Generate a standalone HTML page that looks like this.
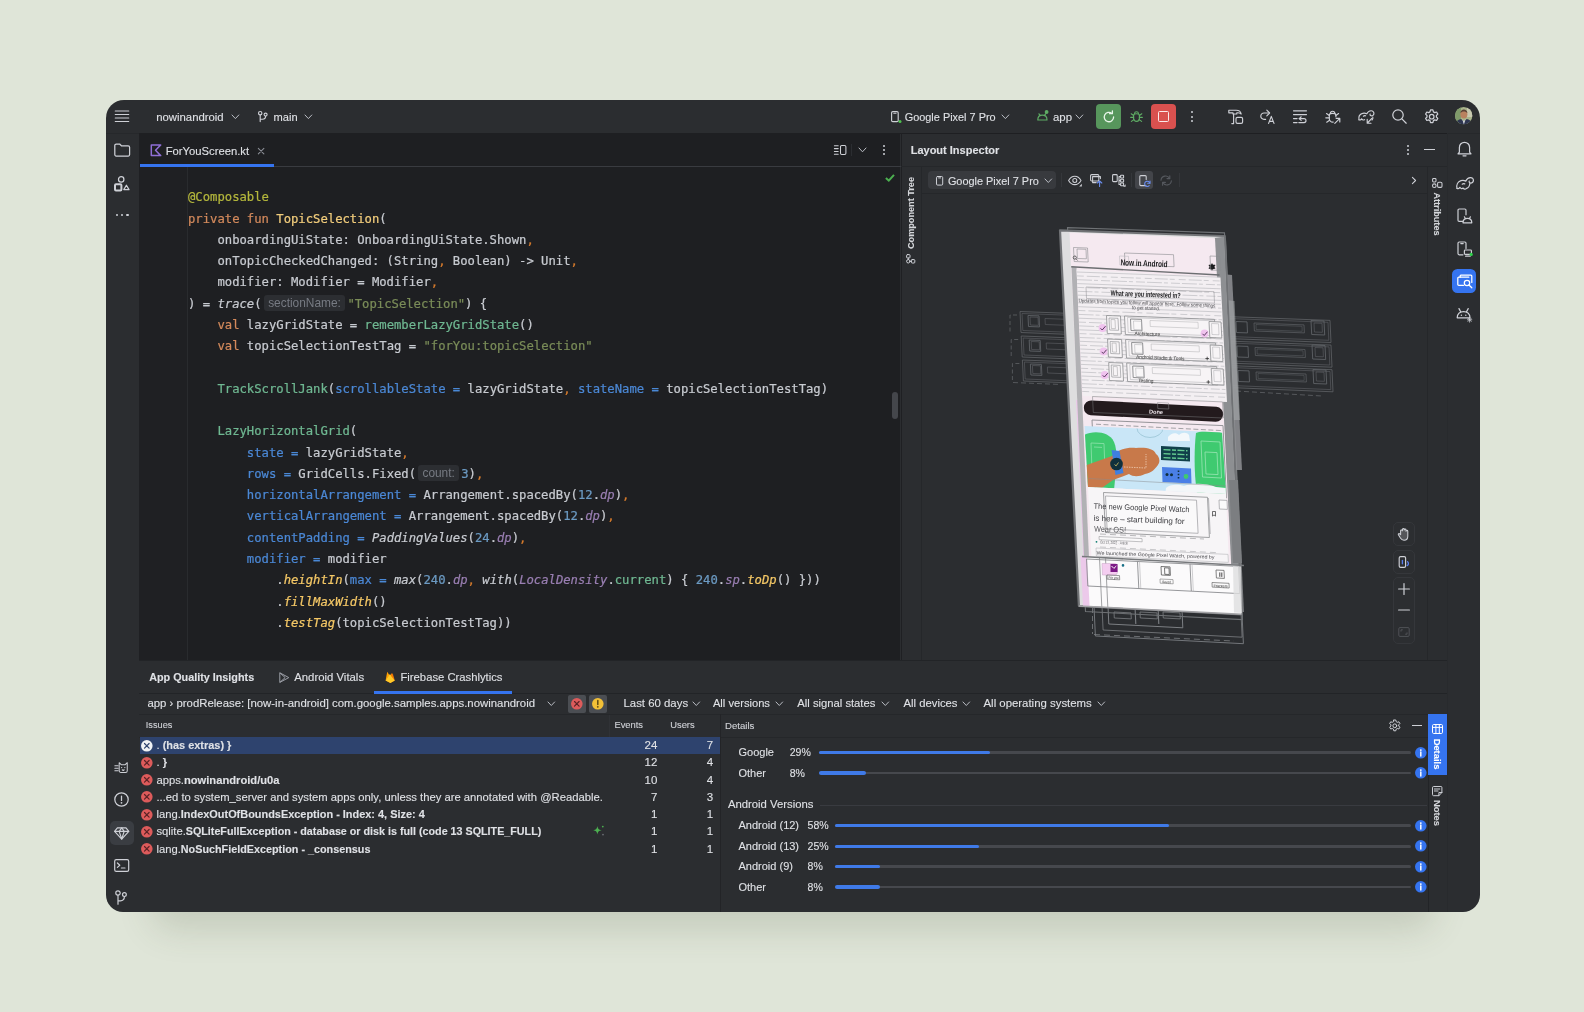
<!DOCTYPE html>
<html lang="en">
<head>
<meta charset="utf-8">
<title>Android Studio - nowinandroid - ForYouScreen.kt</title>
<style>
*{box-sizing:border-box;margin:0;padding:0}
html,body{width:1584px;height:1012px;overflow:hidden}
body{background:#dfe5d8;font-family:"Liberation Sans",sans-serif;font-size:11.2px;color:#dfe1e5;position:relative}
.abs,.win *{position:absolute}
.win{will-change:transform;position:absolute;left:106px;top:100px;width:1374px;height:812px;border-radius:18px 18px 17px 17px;background:#2b2d30;overflow:hidden}
.shadow{position:absolute;left:152px;top:140px;width:1282px;height:756px;border-radius:20px;box-shadow:0 34px 34px 0 rgba(70,82,52,.17)}
.t{-webkit-text-stroke:0.1px currentColor;white-space:nowrap;line-height:14px;height:14px;color:#dfe1e5}
.b{font-weight:bold}
.t b,.t span{position:static}
svg{overflow:visible}
.ic{fill:none;stroke:#ced0d6;stroke-width:1.15;stroke-linecap:round;stroke-linejoin:round}
/* editor */
.ed{left:33px;top:33px;width:761px;height:527px;background:#1e1f22}
.code{font-family:"DejaVu Sans Mono","Liberation Mono",monospace;font-size:12.22px;white-space:pre;color:#c8cbd1;-webkit-text-stroke:0.22px currentColor;left:82px;height:21.28px;line-height:21.28px;letter-spacing:0}
.code span{position:static}
.k{color:#d48a5c}.a{color:#b4b73c}.f{color:#f2cd7c}.c{color:#d47a2c}.s{color:#7a8c58}.n{color:#4b88d6}
.g{color:#6fb892}.u{color:#6c9bc4}.p{color:#9a7fb3;font-style:italic}.e{color:#f5c866;font-style:italic}.i{font-style:italic}
.h{-webkit-text-stroke:0;font-family:"Liberation Sans",sans-serif;font-size:11.9px;color:#777b83;background:#2c2e32;border-radius:3px;display:inline-block;height:16.5px;line-height:16.5px;vertical-align:1px;text-align:center;letter-spacing:0}
</style>
</head>
<body>
<div class="shadow"></div>
<div class="win">
<!-- main toolbar -->
<div style="left:33.00px;top:33.00px;width:1308.00px;height:1.00px;background:#1e1f22;"></div>
<div style="left:0.00px;top:33.00px;width:33.00px;height:1.00px;background:#26282b;"></div>
<div style="left:1341.00px;top:33.00px;width:33.00px;height:1.00px;background:#26282b;"></div>
<svg style="left:9.00px;top:10.00px;" width="14" height="12" viewBox="0 0 14 12"><path class="ic" d="M0.3 1h13.4M0.3 4.5h13.4M0.3 8h13.4M0.3 11.5h13.4" style="stroke-width:1.2"/></svg>
<div class="t " style="left:50.20px;top:10.10px;font-size:11.35px;">nowinandroid</div>
<svg style="left:126.00px;top:14.80px;" width="6.8" height="3.6" viewBox="0 0 6.8 3.6"><path d="M0 0 L3.4 3.6 L6.8 0" fill="none" stroke="#b9bcc3" stroke-width="1.0" stroke-linecap="round" stroke-linejoin="round"/></svg>
<svg style="left:152.00px;top:11.00px;" width="10" height="11" viewBox="0 0 10 11"><g class="ic"><circle cx="2.2" cy="2.2" r="1.7"/><circle cx="7.6" cy="3.6" r="1.5"/><path d="M2.2 4v6.6M2.2 8.2h2.2c2 0 3.2-1 3.2-3"/></g></svg>
<div class="t " style="left:167.60px;top:10.10px;font-size:11.1px;">main</div>
<svg style="left:199.20px;top:14.80px;" width="6.8" height="3.6" viewBox="0 0 6.8 3.6"><path d="M0 0 L3.4 3.6 L6.8 0" fill="none" stroke="#b9bcc3" stroke-width="1.0" stroke-linecap="round" stroke-linejoin="round"/></svg>
<svg style="left:784.50px;top:11.00px;" width="10" height="12" viewBox="0 0 10 12"><g class="ic"><rect x="0.6" y="0.6" width="6.6" height="10" rx="1.2"/><path d="M2.8 2.2h2.2" /></g><circle cx="9" cy="10.6" r="1.5" fill="#4ec24e"/></svg>
<div class="t " style="left:798.70px;top:9.90px;font-size:10.92px;">Google Pixel 7 Pro</div>
<svg style="left:896.00px;top:14.80px;" width="6.8" height="3.6" viewBox="0 0 6.8 3.6"><path d="M0 0 L3.4 3.6 L6.8 0" fill="none" stroke="#b9bcc3" stroke-width="1.0" stroke-linecap="round" stroke-linejoin="round"/></svg>
<svg style="left:930.50px;top:9.50px;" width="12" height="11" viewBox="0 0 12 11"><g fill="none" stroke="#5fad65" stroke-width="1.2" stroke-linecap="round" stroke-linejoin="round"><path d="M0.8 10c0-3 2-4.8 4.6-4.8s4.6 1.800 4.600 4.800z"/><path d="M2 3.800l1.200 1.800M8.600 3.800l-1.100 1.800"/></g><circle cx="9.6" cy="2" r="1.9" fill="#5fad65"/></svg>
<div class="t " style="left:947.00px;top:10.00px;font-size:11.4px;">app</div>
<svg style="left:970.00px;top:14.80px;" width="6.8" height="3.6" viewBox="0 0 6.8 3.6"><path d="M0 0 L3.4 3.6 L6.8 0" fill="none" stroke="#b9bcc3" stroke-width="1.0" stroke-linecap="round" stroke-linejoin="round"/></svg>
<div style="left:990.00px;top:4.00px;width:24.80px;height:24.80px;background:#57965c;border-radius:4px"></div>
<svg style="left:995.50px;top:9.50px;" width="14" height="14" viewBox="0 0 14 14"><g fill="none" stroke="#e8f5e9" stroke-width="1.3" stroke-linecap="round" stroke-linejoin="round"><path d="M11.6 7a4.700 4.700 0 1 1-1.700-3.600"/><path d="M10.4 0.800v2.900h-2.900"/></g></svg>
<svg style="left:1023.50px;top:10.00px;" width="13" height="12.5" viewBox="0 0 13 12.5"><g fill="none" stroke="#5fad65" stroke-width="1.15" stroke-linecap="round" stroke-linejoin="round"><path d="M3.600 5.200c0-1 1.300-1.500 2.900-1.500s2.900 0.500 2.900 1.500v3.300a2.900 2.900 0 0 1-5.800 0z"/><path d="M4.600 3.600a1.900 1.900 0 0 1 3.800 0M3.600 5.400l-2.400-1.600M9.400 5.400l2.400-1.600M3.600 7.400h-2.900M9.400 7.400h2.900M3.900 9.600l-2.500 1.800M9.100 9.600l2.500 1.800"/></g></svg>
<div style="left:1045.40px;top:4.00px;width:24.80px;height:24.80px;background:#d9514f;border-radius:4px"></div>
<div style="left:1052.20px;top:10.80px;width:11.20px;height:11.20px;background:transparent;border:1.4px solid #fbe9e9;border-radius:1.500px"></div>
<div style="left:1084.50px;top:11.00px;width:2.00px;height:2.00px;background:#ced0d6;border-radius:1px"></div>
<div style="left:1084.50px;top:15.70px;width:2.00px;height:2.00px;background:#ced0d6;border-radius:1px"></div>
<div style="left:1084.50px;top:20.30px;width:2.00px;height:2.00px;background:#ced0d6;border-radius:1px"></div>
<svg style="left:1121.50px;top:8.80px;" width="16" height="15.5" viewBox="0 0 16 15.5"><g class="ic"><path d="M0.800 1.200h7.400c2.600 0 4.600 1.600 5 3.800c-1.400-1-2.900-1.400-4.400-1.200v1.200h-3.800v-1.200h-4.200z"/><path d="M5.600 5v9.600h-1.800"/><rect x="8" y="8.400" width="6.600" height="6" rx="1.400"/></g></svg>
<svg style="left:1154.30px;top:9.00px;" width="15" height="15" viewBox="0 0 15 15"><g class="ic"><path d="M8.800 4h-4.800a3.200 3.200 0 0 0 0 6.400h1.600"/><path d="M6.800 1.200l2.800 2.800l-2.800 2.800"/><path d="M8.600 14.400l2.700-7l2.700 7M9.500 12.300h3.700"/></g></svg>
<svg style="left:1187.20px;top:9.50px;" width="14.5" height="14" viewBox="0 0 14.5 14"><g class="ic"><path d="M0.500 0.800h13M0.500 4.600h13M0.500 8.600h3.600M0.500 12.600h3.600"/><path d="M5.800 12.600h5.200a2 2 0 0 0 0-4h-4.800"/><path d="M8.200 6.800l-2 1.800l2 1.800"/></g></svg>
<svg style="left:1219.30px;top:8.80px;" width="16" height="15.5" viewBox="0 0 16 15.5"><g class="ic"><path d="M4.300 6.200c0-1.200 1.500-1.800 3.300-1.800s3.300 0.600 3.300 1.800v1.600M4.300 6.200v3.600a3.300 3.300 0 0 0 4 3.200"/><path d="M5.400 4.400a2.200 2.200 0 0 1 4.400 0M4.300 6.400l-2.800-1.800M10.900 6.400l2.700-1.800M4.300 8.800h-3.500M4.600 11.200l-2.900 2"/><path d="M9.800 14.400l4.800-4.800M11.200 9.400h3.600v3.600"/></g></svg>
<svg style="left:1251.50px;top:9.00px;" width="17" height="15.5" viewBox="0 0 17 15.5"><g class="ic"><path d="M1 10.800c-0.600-3 0.800-5.600 3.600-6.400c1.600-0.500 3-0.200 4.200 0.400c0.800-1.700 2.400-2.900 4.200-3c1.800-0.100 3 1.200 2.900 2.800c-0.100 1.500-1.400 2.500-2.800 2.200c-0.900-0.200-1.300-1-1-1.700"/><path d="M1 10.800c1.200 0.500 2.200 0.100 2.600-1c0.700 1.300 2 1.600 3 0.800"/><path d="M5.400 7.200c0.700-0.600 1.500-0.700 2.200-0.400"/><path d="M13.800 9.400l-4.400 4.600M9.200 10.400v3.800h3.800"/><path d="M14.800 8c0.300 1.200 0 2.200-0.800 3"/></g></svg>
<svg style="left:1285.50px;top:9.20px;" width="15" height="15" viewBox="0 0 15 15"><g class="ic" style="stroke-width:1.25"><circle cx="6" cy="6" r="5.200"/><path d="M9.900 9.900l4.300 4.300"/></g></svg>
<svg style="left:1317.80px;top:8.60px;" width="15.5" height="15.5" viewBox="0 0 15.5 15.5"><g class="ic" style="stroke-width:1.2"><circle cx="7.700" cy="7.700" r="2.300"/><path d="M6.500 0.900h2.400l0.500 2l1.300 0.700l1.900-0.600l1.200 2.100l-1.400 1.400v1.500l1.400 1.400l-1.200 2.100l-1.900-0.600l-1.300 0.700l-0.500 2h-2.400l-0.500-2l-1.300-0.700l-1.900 0.600l-1.200-2.100l1.400-1.400v-1.500l-1.400-1.400l1.200-2.100l1.900 0.600l1.300-0.700z"/></g></svg>
<svg style="left:1349.40px;top:7.40px;" width="17.4" height="17.4" viewBox="0 0 17.4 17.4"><defs><clipPath id="avc"><circle cx="8.700" cy="8.700" r="8.700"/></clipPath></defs><g clip-path="url(#avc)"><rect width="17.400" height="17.400" fill="#a9b48b"/><rect x="0" y="0" width="6" height="17.400" fill="#7f9a6a"/><rect x="12" y="0" width="6" height="10" fill="#c8c9b0"/><ellipse cx="8.900" cy="7.300" rx="3.500" ry="4.300" fill="#b9815f"/><path d="M5.400 6.200c0.200-2.600 1.700-3.800 3.500-3.800s3.400 1.200 3.500 3.800c-0.900-1.400-2-1.800-3.500-1.800s-2.700 0.400-3.500 1.800z" fill="#5a4236"/><path d="M0.500 17.400c0.600-3.600 3.300-5 5.600-5.400l2.800 2.400l2.800-2.400c2.400 0.400 5 1.800 5.600 5.400z" fill="#2e3550"/><path d="M7.300 12.200l1.600 2.400l1.600-2.400l-1.600 5.200z" fill="#e9ecf2"/></g></svg>
<!-- editor -->
<div style="left:32.90px;top:33.00px;width:761.60px;height:527.00px;background:#1e1f22;"></div>
<div style="left:33.00px;top:67.00px;width:47.60px;height:493.00px;background:#1f2023;"></div>
<div style="left:80.60px;top:67.00px;width:1.00px;height:493.00px;background:#292b2e;"></div>
<div style="left:33.00px;top:66.00px;width:761.50px;height:1.00px;background:#393b40;"></div>
<div style="left:33.00px;top:64.00px;width:135.30px;height:3.00px;background:#3574f0;border-radius:0"></div>
<svg style="left:43.60px;top:43.80px;" width="12" height="12.5" viewBox="0 0 12 12.5"><path d="M1.300 1h9.400l-5.200 5.300l5.200 5.300h-9.400z" fill="none" stroke="#8f6fd6" stroke-width="1.500" stroke-linejoin="round"/></svg>
<div class="t " style="left:59.70px;top:44.10px;font-size:11.25px;">ForYouScreen.kt</div>
<svg style="left:151.70px;top:48.20px;" width="6.2" height="6.2" viewBox="0 0 6.2 6.2"><path d="M0.300 0.300l5.600 5.600M5.900 0.300l-5.600 5.600" fill="none" stroke="#8b8e96" stroke-width="1.050" stroke-linecap="round"/></svg>
<svg style="left:728.30px;top:45.00px;" width="12.5" height="10" viewBox="0 0 12.5 10"><g class="ic" style="stroke-width:1.050"><path d="M0.400 0.800h3.800M0.400 3.600h3.800M0.400 6.400h3.800M0.400 9.200h3.800"/><rect x="6.500" y="0.500" width="5.400" height="9" rx="1.200"/></g></svg>
<div style="left:745.20px;top:44.00px;width:1.00px;height:12.00px;background:#2b2d31;"></div>
<svg style="left:753.00px;top:48.20px;" width="7" height="3.8" viewBox="0 0 7 3.8"><path d="M0 0 L3.5 3.8 L7 0" fill="none" stroke="#b9bcc3" stroke-width="1.0" stroke-linecap="round" stroke-linejoin="round"/></svg>
<div style="left:776.90px;top:44.90px;width:2.00px;height:2.00px;background:#ced0d6;border-radius:1px"></div>
<div style="left:776.90px;top:49.00px;width:2.00px;height:2.00px;background:#ced0d6;border-radius:1px"></div>
<div style="left:776.90px;top:53.20px;width:2.00px;height:2.00px;background:#ced0d6;border-radius:1px"></div>
<svg style="left:778.80px;top:73.60px;" width="9.8" height="7.6" viewBox="0 0 9.8 7.6"><path d="M0.900 4l2.900 2.700l5.200-5.800" fill="none" stroke="#4caf50" stroke-width="2" stroke-linejoin="miter"/></svg>
<div style="left:786.00px;top:292.00px;width:6.20px;height:27.00px;background:#44464b;border-radius:3px"></div>
<div class="code" style="left:82.00px;top:87.23px"><span class="a">@Composable</span></div>
<div class="code" style="left:82.00px;top:108.51px"><span class="k">private fun</span> <span class="f">TopicSelection</span>(</div>
<div class="code" style="left:82.00px;top:129.79px">    onboardingUiState: OnboardingUiState.Shown<span class="c">,</span></div>
<div class="code" style="left:82.00px;top:151.07px">    onTopicCheckedChanged: (String<span class="c">,</span> Boolean) -&gt; Unit<span class="c">,</span></div>
<div class="code" style="left:82.00px;top:172.35px">    modifier: Modifier = Modifier<span class="c">,</span></div>
<div class="code" style="left:82.00px;top:193.63px">) = <span class="i">trace</span>(<span style="display:inline-block;width:85.800px;text-align:center"><span class="h" style="width:80.8px">sectionName:</span></span><span class="s">"TopicSelection"</span>) {</div>
<div class="code" style="left:82.00px;top:214.91px">    <span class="k">val</span> lazyGridState = <span class="g">rememberLazyGridState</span>()</div>
<div class="code" style="left:82.00px;top:236.19px">    <span class="k">val</span> topicSelectionTestTag = <span class="s">"forYou:topicSelection"</span></div>
<div class="code" style="left:82.00px;top:278.75px">    <span class="g">TrackScrollJank</span>(<span class="n">scrollableState =</span> lazyGridState<span class="c">,</span> <span class="n">stateName =</span> topicSelectionTestTag)</div>
<div class="code" style="left:82.00px;top:321.31px">    <span class="g">LazyHorizontalGrid</span>(</div>
<div class="code" style="left:82.00px;top:342.59px">        <span class="n">state =</span> lazyGridState<span class="c">,</span></div>
<div class="code" style="left:82.00px;top:363.87px">        <span class="n">rows =</span> GridCells.Fixed(<span style="display:inline-block;width:45.200px;text-align:center"><span class="h" style="width:41.6px">count:</span></span><span class="u">3</span>)<span class="c">,</span></div>
<div class="code" style="left:82.00px;top:385.15px">        <span class="n">horizontalArrangement =</span> Arrangement.spacedBy(<span class="u">12</span>.<span class="p">dp</span>)<span class="c">,</span></div>
<div class="code" style="left:82.00px;top:406.43px">        <span class="n">verticalArrangement =</span> Arrangement.spacedBy(<span class="u">12</span>.<span class="p">dp</span>)<span class="c">,</span></div>
<div class="code" style="left:82.00px;top:427.71px">        <span class="n">contentPadding =</span> <span class="i">PaddingValues</span>(<span class="u">24</span>.<span class="p">dp</span>)<span class="c">,</span></div>
<div class="code" style="left:82.00px;top:448.99px">        <span class="n">modifier =</span> modifier</div>
<div class="code" style="left:82.00px;top:470.27px">            .<span class="e">heightIn</span>(<span class="n">max =</span> <span class="i">max</span>(<span class="u">240</span>.<span class="p">dp</span><span class="c">,</span> <span class="i">with</span>(<span class="p">LocalDensity</span>.<span class="g">current</span>) { <span class="u">240</span>.<span class="p">sp</span>.<span class="e">toDp</span>() }))</div>
<div class="code" style="left:82.00px;top:491.55px">            .<span class="e">fillMaxWidth</span>()</div>
<div class="code" style="left:82.00px;top:512.83px">            .<span class="e">testTag</span>(topicSelectionTestTag))</div>
<!-- layout inspector -->
<div style="left:794.50px;top:33.00px;width:1.00px;height:527.00px;background:#1f2023;"></div>
<div style="left:795.00px;top:66.00px;width:546.00px;height:1.00px;background:#25272a;"></div>
<div style="left:814.50px;top:67.00px;width:1.00px;height:493.00px;background:#25272a;"></div>
<div style="left:815.00px;top:93.00px;width:506.00px;height:1.00px;background:#25272a;"></div>
<div style="left:1321.00px;top:67.00px;width:1.00px;height:493.00px;background:#25272a;"></div>
<div class="t b" style="left:804.70px;top:43.30px;font-size:11.0px;">Layout Inspector</div>
<div style="left:1301.40px;top:44.90px;width:2.00px;height:2.00px;background:#ced0d6;border-radius:1px"></div>
<div style="left:1301.40px;top:49.00px;width:2.00px;height:2.00px;background:#ced0d6;border-radius:1px"></div>
<div style="left:1301.40px;top:53.20px;width:2.00px;height:2.00px;background:#ced0d6;border-radius:1px"></div>
<div style="left:1318.40px;top:49.30px;width:10.40px;height:1.20px;background:#ced0d6;"></div>
<div class="t" style="left:764.80px;top:105.80px;width:80px;text-align:center;font-size:9.15px;font-weight:bold;color:#d5d7db;transform:rotate(-90deg)">Component Tree</div>
<svg style="left:800.00px;top:154.00px;" width="9.5" height="10" viewBox="0 0 9.5 10"><g class="ic" style="stroke-width:1"><rect x="0.600" y="0.600" width="3.400" height="3.400" rx="0.800"/><rect x="5.400" y="5.600" width="3.400" height="3.400" rx="0.800"/><circle cx="2.300" cy="7.300" r="1.700"/><path d="M2.300 4v1.600M4 7.300h1.400"/></g></svg>
<div style="left:822.00px;top:71.40px;width:128.20px;height:17.20px;background:#383a3e;border-radius:4px"></div>
<svg style="left:830.00px;top:75.60px;" width="7.4" height="9.6" viewBox="0 0 7.4 9.6"><g class="ic" style="stroke-width:1"><rect x="0.500" y="0.500" width="6.200" height="8.600" rx="1.100"/><path d="M2.600 1.900h2"/></g></svg>
<div class="t " style="left:841.90px;top:73.70px;font-size:10.92px;">Google Pixel 7 Pro</div>
<svg style="left:939.00px;top:78.60px;" width="6.6" height="3.5" viewBox="0 0 6.6 3.5"><path d="M0 0 L3.3 3.5 L6.6 0" fill="none" stroke="#b9bcc3" stroke-width="1.0" stroke-linecap="round" stroke-linejoin="round"/></svg>
<div style="left:955.00px;top:73.00px;width:1.00px;height:14.00px;background:#35373b;"></div>
<svg style="left:962.00px;top:75.00px;" width="14" height="11.5" viewBox="0 0 14 11.5"><g class="ic" style="stroke-width:1.050"><path d="M0.600 5.400c1.600-2.800 3.600-4.200 6.200-4.200s4.600 1.400 6.200 4.200c-1.600 2.800-3.600 4.200-6.200 4.200s-4.600-1.400-6.200-4.200z"/><circle cx="6.800" cy="5.400" r="2"/></g><path d="M13.800 8.800v2.600h-2.600z" fill="#ced0d6"/></svg>
<svg style="left:984.00px;top:74.30px;" width="13" height="13" viewBox="0 0 13 13"><g class="ic" style="stroke-width:1.050"><rect x="0.600" y="0.600" width="8.200" height="6.400" rx="1"/><path d="M2.600 2.600h7.800v2M2.600 2.600v6h3.600"/></g><path d="M9.600 12.400v-5.400M7.400 9l2.200-2.200l2.200 2.200" fill="none" stroke="#6b8ef0" stroke-width="1.100" stroke-linecap="round" stroke-linejoin="round"/></svg>
<svg style="left:1005.50px;top:74.30px;" width="13.5" height="13" viewBox="0 0 13.5 13"><g class="ic" style="stroke-width:1.050"><rect x="0.600" y="0.600" width="4.600" height="7" rx="0.900"/><path d="M7 2.600h1.600M7 6.600h1.600M7 10.400h1.600M7 2.600v7.800"/><rect x="8.600" y="1.200" width="3" height="2.800" rx="0.500"/><rect x="8.600" y="5.200" width="3" height="2.800" rx="0.500"/><rect x="8.600" y="9" width="3" height="2.800" rx="0.500"/></g><path d="M13.600 10.200v2.600h-2.600z" fill="#ced0d6"/></svg>
<div style="left:1024.50px;top:73.00px;width:1.00px;height:14.00px;background:#35373b;"></div>
<div style="left:1029.00px;top:71.20px;width:18.20px;height:18.00px;background:#43454a;border-radius:3px"></div>
<svg style="left:1032.50px;top:74.50px;" width="12" height="12" viewBox="0 0 12 12"><g class="ic" style="stroke-width:1.050"><path d="M6.800 10.600h-5a1 1 0 0 1-1-1v-8a1 1 0 0 1 1-1h4.400a1 1 0 0 1 1 1v3"/></g><g fill="none" stroke="#6b8ef0" stroke-width="1.100" stroke-linecap="round"><path d="M10.800 8.200a2.600 2.600 0 1 0-0.600 2.400"/><path d="M11 6v2.300h-2.300"/></g></svg>
<svg style="left:1053.50px;top:74.80px;" width="12.5" height="11" viewBox="0 0 12.5 11"><g fill="none" stroke="#55585e" stroke-width="1.100" stroke-linecap="round" stroke-linejoin="round"><path d="M1 5.200a4.600 4.600 0 0 1 8.600-1.800M11.400 5.800a4.600 4.600 0 0 1-8.600 1.800"/><path d="M9.800 0.800v2.800h-2.800M2.600 10.200v-2.800h2.800"/></g></svg>
<div style="left:1072.50px;top:73.00px;width:1.00px;height:14.00px;background:#35373b;"></div>
<svg style="left:1305.80px;top:76.80px;" width="4" height="7" viewBox="0 0 4 7"><path d="M0.400 0.400l3.200 3.100l-3.200 3.100" fill="none" stroke="#ced0d6" stroke-width="1.050" stroke-linecap="round" stroke-linejoin="round"/></svg>
<svg style="left:1325.60px;top:77.80px;" width="10.5" height="10.2" viewBox="0 0 10.5 10.2"><g class="ic" style="stroke-width:1.050"><rect x="0.600" y="0.600" width="3.400" height="3.400" rx="0.900"/><circle cx="2.300" cy="7.700" r="1.800"/><rect x="5.600" y="4.200" width="4.400" height="5.200" rx="1.200"/></g></svg>
<div class="t" style="left:1291.20px;top:106.80px;width:80px;text-align:center;font-size:9.150px;font-weight:bold;color:#d5d7db;transform:rotate(90deg)">Attributes</div>
<div style="left:1287.00px;top:422.00px;width:22.20px;height:23.60px;background:#2c2e31;border-radius:5px;border:1px solid #35373b"></div>
<svg style="left:1291.10px;top:426.80px;" width="14" height="14" viewBox="0 0 14 14"><g class="ic" style="stroke-width:1.050"><path d="M3.600 7.600v-3.800a0.900 0.900 0 0 1 1.800 0v-1.400a0.900 0.900 0 0 1 1.800 0v0.600a0.900 0.900 0 0 1 1.800 0v1.200a0.900 0.900 0 0 1 1.800 0v5c0 2.600-1.600 4-3.800 4c-1.800 0-2.800-0.800-3.600-2.200l-2-3.200c-0.400-0.800 0.600-1.600 1.400-0.800z" fill="#ced0d6" fill-opacity="0.250"/></g></svg>
<div style="left:1287.00px;top:450.00px;width:22.20px;height:23.60px;background:#2c2e31;border-radius:5px;border:1px solid #35373b"></div>
<svg style="left:1291.10px;top:454.80px;" width="14" height="14" viewBox="0 0 14 14"><g class="ic" style="stroke-width:1.150"><rect x="2.200" y="1.600" width="6.400" height="10.800" rx="1.400"/></g><g fill="none" stroke="#5b7ff0" stroke-width="1.300" stroke-linecap="round"><path d="M5.400 5.400v3.400"/><path d="M10.600 6.800c1.300 1.200 1 3-0.400 3.800"/></g></svg>
<div style="left:1287.00px;top:477.40px;width:22.20px;height:66.60px;background:#2c2e31;border-radius:5px;border:1px solid #35373b"></div>
<svg style="left:1291.10px;top:482.30px;" width="14" height="14" viewBox="0 0 14 14"><g class="ic" style="stroke-width:1.200"><path d="M7 1.600v10.800M1.600 7h10.800"/></g></svg>
<svg style="left:1291.10px;top:503.40px;" width="14" height="14" viewBox="0 0 14 14"><g class="ic" style="stroke-width:1.200"><path d="M1.600 7h10.800"/></g></svg>
<svg style="left:1291.10px;top:525.20px;" width="14" height="14" viewBox="0 0 14 14"><g fill="none" stroke="#505257" stroke-width="1"><rect x="1.800" y="2.600" width="10.400" height="8.800" rx="1.200"/><path d="M4 6.600v-1.800h1.800M10 7.400v1.800h-1.800"/></g></svg>
<svg style="left:815.00px;top:94.00px;" width="506" height="466" viewBox="921 194 506 466"><g font-family="Liberation Sans, sans-serif"><polygon points="1020.0,311.5 1080.0,313.8 1081.0,334.8 1021.0,332.5" fill="none" stroke="#5f6266" stroke-width="0.8" /><polygon points="1022.0,313.5 1080.0,315.7 1080.8,332.7 1022.8,330.5" fill="none" stroke="#5f6266" stroke-width="0.6" /><polygon points="1028.0,315.5 1039.0,315.9 1039.5,326.9 1028.5,326.5" fill="none" stroke="#5f6266" stroke-width="0.9" /><polygon points="1030.0,317.0 1038.0,317.3 1038.4,325.3 1030.4,325.0" fill="none" stroke="#5f6266" stroke-width="0.6" /><polygon points="1045.0,318.5 1071.0,319.5 1071.3,325.5 1045.3,324.5" fill="none" stroke="#5f6266" stroke-width="0.6" /><path d="M1017.0 315.0h-7v17" stroke="#5f6266" stroke-width="0.800" fill="none" stroke-dasharray="4 2.500"/><polygon points="1021.2,336.0 1081.2,338.3 1082.2,359.4 1022.2,357.0" fill="none" stroke="#5f6266" stroke-width="0.8" /><polygon points="1023.2,338.0 1081.2,340.3 1082.0,357.3 1024.0,355.0" fill="none" stroke="#5f6266" stroke-width="0.6" /><polygon points="1029.2,340.0 1040.2,340.4 1040.7,351.4 1029.7,351.0" fill="none" stroke="#5f6266" stroke-width="0.9" /><polygon points="1031.2,341.5 1039.2,341.8 1039.6,349.8 1031.6,349.5" fill="none" stroke="#5f6266" stroke-width="0.6" /><polygon points="1046.2,343.0 1072.2,344.0 1072.5,350.0 1046.5,349.0" fill="none" stroke="#5f6266" stroke-width="0.6" /><path d="M1018.2 339.5h-7v17" stroke="#5f6266" stroke-width="0.800" fill="none" stroke-dasharray="4 2.500"/><polygon points="1022.4,360.0 1082.4,362.4 1083.4,383.4 1023.4,381.0" fill="none" stroke="#5f6266" stroke-width="0.8" /><polygon points="1024.4,362.0 1082.4,364.3 1083.2,381.4 1025.2,379.0" fill="none" stroke="#5f6266" stroke-width="0.6" /><polygon points="1030.4,364.0 1041.4,364.4 1041.9,375.4 1030.9,375.0" fill="none" stroke="#5f6266" stroke-width="0.9" /><polygon points="1032.4,365.5 1040.4,365.8 1040.8,373.8 1032.8,373.5" fill="none" stroke="#5f6266" stroke-width="0.6" /><polygon points="1047.4,367.0 1073.4,368.0 1073.7,374.1 1047.7,373.0" fill="none" stroke="#5f6266" stroke-width="0.6" /><path d="M1019.4 363.5h-7v17" stroke="#5f6266" stroke-width="0.800" fill="none" stroke-dasharray="4 2.500"/><path d="M1013 382.500l48 2" stroke="#5f6266" stroke-width="0.800" fill="none" stroke-dasharray="5 3"/><polygon points="1226.0,316.5 1330.0,320.4 1331.0,342.5 1227.0,338.5" fill="none" stroke="#5f6266" stroke-width="0.8" /><polygon points="1229.0,318.5 1328.0,322.3 1328.8,340.3 1229.8,336.5" fill="none" stroke="#5f6266" stroke-width="0.6" /><polygon points="1236.0,321.5 1247.0,321.9 1247.5,332.9 1236.5,332.5" fill="none" stroke="#5f6266" stroke-width="0.9" /><polygon points="1254.0,323.0 1304.0,324.9 1304.4,332.9 1254.4,331.0" fill="none" stroke="#5f6266" stroke-width="0.7" /><polygon points="1256.0,324.5 1302.0,326.3 1302.2,331.3 1256.2,329.5" fill="none" stroke="#5f6266" stroke-width="0.5" /><polygon points="1311.0,320.5 1324.0,321.0 1324.7,335.0 1311.7,334.5" fill="none" stroke="#5f6266" stroke-width="0.9" /><polygon points="1314.0,323.0 1322.0,323.3 1322.4,332.3 1314.4,332.0" fill="none" stroke="#5f6266" stroke-width="0.6" /><polygon points="1227.0,341.0 1331.0,345.1 1332.0,367.2 1228.0,363.0" fill="none" stroke="#5f6266" stroke-width="0.8" /><polygon points="1230.0,343.0 1329.0,346.9 1329.8,365.0 1230.8,361.0" fill="none" stroke="#5f6266" stroke-width="0.6" /><polygon points="1237.0,346.0 1248.0,346.4 1248.5,357.4 1237.5,357.0" fill="none" stroke="#5f6266" stroke-width="0.9" /><polygon points="1255.0,347.5 1305.0,349.5 1305.4,357.5 1255.4,355.5" fill="none" stroke="#5f6266" stroke-width="0.7" /><polygon points="1257.0,349.0 1303.0,350.8 1303.2,355.8 1257.2,354.0" fill="none" stroke="#5f6266" stroke-width="0.5" /><polygon points="1312.0,345.0 1325.0,345.5 1325.7,359.5 1312.7,359.0" fill="none" stroke="#5f6266" stroke-width="0.9" /><polygon points="1315.0,347.5 1323.0,347.8 1323.4,356.8 1315.4,356.5" fill="none" stroke="#5f6266" stroke-width="0.6" /><polygon points="1228.0,365.5 1332.0,369.7 1333.0,391.8 1229.0,387.5" fill="none" stroke="#5f6266" stroke-width="0.8" /><polygon points="1231.0,367.5 1330.0,371.5 1330.8,389.6 1231.8,385.5" fill="none" stroke="#5f6266" stroke-width="0.6" /><polygon points="1238.0,370.5 1249.0,370.9 1249.5,381.9 1238.5,381.5" fill="none" stroke="#5f6266" stroke-width="0.9" /><polygon points="1256.0,372.0 1306.0,374.0 1306.4,382.0 1256.4,380.0" fill="none" stroke="#5f6266" stroke-width="0.7" /><polygon points="1258.0,373.5 1304.0,375.4 1304.2,380.4 1258.2,378.5" fill="none" stroke="#5f6266" stroke-width="0.5" /><polygon points="1313.0,369.5 1326.0,370.0 1326.7,384.0 1313.7,383.5" fill="none" stroke="#5f6266" stroke-width="0.9" /><polygon points="1316.0,372.0 1324.0,372.3 1324.4,381.3 1316.4,381.0" fill="none" stroke="#5f6266" stroke-width="0.6" /><path d="M1236 391l86 5" stroke="#5f6266" stroke-width="0.800" fill="none" stroke-dasharray="5 3"/><polygon points="1094.0,606.0 1242.0,613.5 1243.4,643.7 1095.4,636.0" fill="none" stroke="#7c7f83" stroke-width="0.9" /><polygon points="1102.0,606.0 1241.0,613.1 1242.1,637.2 1103.1,630.0" fill="none" stroke="#7c7f83" stroke-width="0.8" /><polygon points="1108.0,606.0 1182.0,609.8 1182.8,627.8 1108.8,624.0" fill="none" stroke="#7c7f83" stroke-width="1" /><polygon points="1114.0,612.0 1131.0,612.9 1131.3,618.9 1114.3,618.0" fill="none" stroke="#7c7f83" stroke-width="0.8" /><polygon points="1140.0,612.0 1157.0,612.9 1157.3,618.9 1140.3,618.0" fill="none" stroke="#7c7f83" stroke-width="0.8" /><polygon points="1163.0,612.0 1180.0,612.9 1180.3,618.9 1163.3,618.0" fill="none" stroke="#7c7f83" stroke-width="0.8" /><path d="M1135.0 606.0L1135.8 624.0" stroke="#7c7f83" stroke-width="1.1" fill="none" /><path d="M1158.0 606.0L1158.8 624.0" stroke="#7c7f83" stroke-width="1.1" fill="none" /><path d="M1094 634.500l140 6.500" stroke="#7c7f83" stroke-width="0.800" fill="none" stroke-dasharray="6 4"/><path d="M1092.500 608v26" stroke="#7c7f83" stroke-width="0.800" fill="none" stroke-dasharray="5 3"/><polygon points="1067.5,227.6 1224.5,232.9 1242.5,619.6 1085.5,611.6" fill="none" stroke="#6f7275" stroke-width="1.1" /><polygon points="1216,238 1226,238.500 1244,612 1234,612" fill="#7c7e81"/><polygon points="1222,274 1232,275 1242,470 1232,470" fill="#8f9194" opacity="0.850"/><polygon points="1226,300 1234.500,301 1240,420 1231.500,420" fill="#a4a6a8" opacity="0.600"/><polygon points="1060,230.400 1224.700,236 1241.400,614.300 1078.900,606" fill="#dededf" stroke="#707275" stroke-width="2.200" stroke-linejoin="round"/><polygon points="1214.500,238 1224,236.800 1240.600,613.600 1233,611.500" fill="#8d8f92"/><polygon points="1069.500,232.600 1215,238.200 1233.500,611.500 1087,604.500" fill="#f5e9f0"/><polygon points="1076,400 1081,400 1090.500,604.600 1085.500,604.400" fill="#ecc9ea"/><polygon points="1071.500,267 1076.500,267.300 1091,604 1086,604" fill="#b1b1b4"/><polygon points="1073.5,247.5 1087.5,248.0 1088.2,262.0 1074.2,261.5" fill="none" stroke="#8a8b8e" stroke-width="0.6" /><polygon points="1077.0,249.0 1086.0,249.3 1086.4,258.8 1077.4,258.5" fill="none" stroke="#8a8b8e" stroke-width="0.6" /><circle cx="1074.800" cy="257.600" r="1.600" fill="none" stroke="#333" stroke-width="0.700"/><path d="M1076 258.800l1.600 1.700" stroke="#333" stroke-width="0.700"/><polygon points="1124.5,253.0 1173.5,254.7 1174.1,266.7 1125.1,265.0" fill="none" stroke="#8a8b8e" stroke-width="0.6" /><polygon points="1119.5,256.0 1128.5,256.3 1128.9,265.3 1119.9,265.0" fill="none" stroke="#b5b5b8" stroke-width="0.5" /><text x="1120.5" y="265.3" font-size="8.6" font-weight="bold" fill="#1b1b1d" text-anchor="start" transform="rotate(2.1 1120.5 265.3)" textLength="47" lengthAdjust="spacingAndGlyphs" >Now in Android</text><circle cx="1212" cy="266.800" r="2.600" fill="#1b1b1d"/><circle cx="1212" cy="266.800" r="0.900" fill="#f5e9f0"/><path d="M1212 263.400v6.800M1208.800 265l6.400 3.600M1208.800 268.600l6.400-3.600" stroke="#1b1b1d" stroke-width="1.100"/><polygon points="1210.0,256.0 1220.0,256.4 1220.7,270.4 1210.7,270.0" fill="none" stroke="#8a8b8e" stroke-width="0.6" /><path d="M1071.200 266.800L1219.500 275" stroke="#6c6e71" stroke-width="1.400"/><polygon points="1076.500,269.500 1220.500,277.500 1227,402 1083,396" fill="#f3eff2"/><path d="M1076.6 272.0L1220.1 277.2" stroke="#bdbdc1" stroke-width="0.7" fill="none" /><path d="M1076.8 275.9L1220.3 281.0" stroke="#bdbdc1" stroke-width="0.7" fill="none" stroke-dasharray="7 3 13 2 5 4"/><path d="M1077.0 279.7L1220.5 284.9" stroke="#bdbdc1" stroke-width="0.7" fill="none" stroke-dasharray="15 2 4 3 9 2"/><path d="M1077.2 283.6L1220.7 288.8" stroke="#bdbdc1" stroke-width="0.7" fill="none" /><path d="M1077.3 287.4L1220.8 292.7" stroke="#bdbdc1" stroke-width="0.7" fill="none" stroke-dasharray="7 3 13 2 5 4"/><path d="M1077.5 291.3L1221.0 296.5" stroke="#bdbdc1" stroke-width="0.7" fill="none" stroke-dasharray="15 2 4 3 9 2"/><path d="M1077.7 295.1L1221.2 300.4" stroke="#bdbdc1" stroke-width="0.7" fill="none" /><path d="M1077.9 299.0L1221.4 304.3" stroke="#bdbdc1" stroke-width="0.7" fill="none" stroke-dasharray="7 3 13 2 5 4"/><path d="M1078.1 302.8L1221.6 308.2" stroke="#bdbdc1" stroke-width="0.7" fill="none" stroke-dasharray="15 2 4 3 9 2"/><path d="M1078.2 306.7L1221.7 312.0" stroke="#bdbdc1" stroke-width="0.7" fill="none" /><path d="M1078.4 310.5L1221.9 315.9" stroke="#bdbdc1" stroke-width="0.7" fill="none" stroke-dasharray="7 3 13 2 5 4"/><path d="M1078.6 314.4L1222.1 319.8" stroke="#bdbdc1" stroke-width="0.7" fill="none" stroke-dasharray="15 2 4 3 9 2"/><path d="M1078.8 318.2L1222.3 323.6" stroke="#bdbdc1" stroke-width="0.7" fill="none" /><path d="M1079.0 322.1L1222.5 327.5" stroke="#bdbdc1" stroke-width="0.7" fill="none" stroke-dasharray="7 3 13 2 5 4"/><path d="M1079.2 325.9L1222.7 331.4" stroke="#bdbdc1" stroke-width="0.7" fill="none" stroke-dasharray="15 2 4 3 9 2"/><path d="M1079.3 329.8L1222.8 335.3" stroke="#bdbdc1" stroke-width="0.7" fill="none" /><path d="M1079.5 333.6L1223.0 339.1" stroke="#bdbdc1" stroke-width="0.7" fill="none" stroke-dasharray="7 3 13 2 5 4"/><path d="M1079.7 337.5L1223.2 343.0" stroke="#bdbdc1" stroke-width="0.7" fill="none" stroke-dasharray="15 2 4 3 9 2"/><path d="M1079.9 341.3L1223.4 346.9" stroke="#bdbdc1" stroke-width="0.7" fill="none" /><path d="M1080.1 345.2L1223.6 350.8" stroke="#bdbdc1" stroke-width="0.7" fill="none" stroke-dasharray="7 3 13 2 5 4"/><path d="M1080.2 349.0L1223.7 354.6" stroke="#bdbdc1" stroke-width="0.7" fill="none" stroke-dasharray="15 2 4 3 9 2"/><path d="M1080.4 352.9L1223.9 358.5" stroke="#bdbdc1" stroke-width="0.7" fill="none" /><path d="M1080.6 356.7L1224.1 362.4" stroke="#bdbdc1" stroke-width="0.7" fill="none" stroke-dasharray="7 3 13 2 5 4"/><path d="M1080.8 360.6L1224.3 366.3" stroke="#bdbdc1" stroke-width="0.7" fill="none" stroke-dasharray="15 2 4 3 9 2"/><path d="M1081.0 364.4L1224.5 370.1" stroke="#bdbdc1" stroke-width="0.7" fill="none" /><path d="M1081.1 368.3L1224.6 374.0" stroke="#bdbdc1" stroke-width="0.7" fill="none" stroke-dasharray="7 3 13 2 5 4"/><path d="M1081.3 372.1L1224.8 377.9" stroke="#bdbdc1" stroke-width="0.7" fill="none" stroke-dasharray="15 2 4 3 9 2"/><path d="M1081.5 376.0L1225.0 381.8" stroke="#bdbdc1" stroke-width="0.7" fill="none" /><path d="M1081.7 379.8L1225.2 385.6" stroke="#bdbdc1" stroke-width="0.7" fill="none" stroke-dasharray="7 3 13 2 5 4"/><path d="M1081.9 383.7L1225.4 389.5" stroke="#bdbdc1" stroke-width="0.7" fill="none" stroke-dasharray="15 2 4 3 9 2"/><path d="M1082.0 387.5L1225.5 393.4" stroke="#bdbdc1" stroke-width="0.7" fill="none" /><path d="M1082.2 391.4L1225.7 397.3" stroke="#bdbdc1" stroke-width="0.7" fill="none" stroke-dasharray="7 3 13 2 5 4"/><polygon points="1086.0,287.0 1214.0,291.7 1214.5,303.2 1086.5,298.5" fill="none" stroke="#8a8b8e" stroke-width="0.5" /><text x="1110.5" y="295.6" font-size="7.6" font-weight="bold" fill="#1b1b1d" text-anchor="start" transform="rotate(2.1 1110.5 295.6)" textLength="70" lengthAdjust="spacingAndGlyphs" >What are you interested in?</text><text x="1078.5" y="302.3" font-size="5" font-weight="normal" fill="#4a4a4e" text-anchor="start" transform="rotate(2.1 1078.5 302.3)" textLength="137" lengthAdjust="spacingAndGlyphs" >Updates from topics you follow will appear here. Follow some things</text><text x="1132.0" y="309.3" font-size="5" font-weight="normal" fill="#4a4a4e" text-anchor="start" transform="rotate(2.1 1132.0 309.3)" textLength="28" lengthAdjust="spacingAndGlyphs" >to get started.</text><polygon points="1106.5,315.5 1120.5,316.0 1121.3,334.0 1107.3,333.5" fill="#f7f4f6" stroke="#8a8b8e" stroke-width="0.8" /><polygon points="1109.0,318.0 1118.0,318.3 1118.6,330.3 1109.6,330.0" fill="none" stroke="#8a8b8e" stroke-width="0.6" /><polygon points="1111.0,319.5 1115.0,319.7 1115.4,328.7 1111.4,328.5" fill="none" stroke="#9a9a9d" stroke-width="0.5" /><circle cx="1102.5" cy="328.0" r="3.900" fill="#f0c3ee"/><path d="M1100.5 328.3l1.700 1.700l3.300-3.800" stroke="#4c2a52" stroke-width="0.900" fill="none"/><polygon points="1124.5,316.0 1214.5,319.4 1215.4,338.0 1125.4,334.5" fill="#f7f4f6" stroke="#8a8b8e" stroke-width="0.8" /><polygon points="1127.5,317.5 1213.5,320.8 1214.2,335.8 1128.2,332.5" fill="none" stroke="#a9a9ac" stroke-width="0.5" /><polygon points="1130.5,319.0 1141.5,319.4 1142.0,330.9 1131.0,330.5" fill="#f9f7f8" stroke="#77787b" stroke-width="0.8" /><polygon points="1133.5,321.0 1141.5,321.3 1141.9,329.8 1133.9,329.5" fill="none" stroke="#a9a9ac" stroke-width="0.5" /><polygon points="1150.0,320.5 1198.0,322.3 1198.3,328.3 1150.3,326.5" fill="none" stroke="#b0b0b3" stroke-width="0.5" /><text x="1134.5" y="335.0" font-size="4.8" font-weight="normal" fill="#333" text-anchor="start" transform="rotate(2.1 1134.5 335.0)" >Architecture</text><polygon points="1209.0,321.5 1221.0,322.0 1221.8,338.0 1209.8,337.5" fill="#f7f4f6" stroke="#8a8b8e" stroke-width="0.8" /><polygon points="1211.5,323.5 1218.5,323.8 1219.0,334.8 1212.0,334.5" fill="none" stroke="#a9a9ac" stroke-width="0.5" /><circle cx="1204.500" cy="333.5" r="3.900" fill="#f0c3ee"/><path d="M1202.500 333.8l1.700 1.700l3.300-3.800" stroke="#4c2a52" stroke-width="0.900" fill="none"/><polygon points="1107.6,339.0 1121.6,339.5 1122.4,357.6 1108.4,357.0" fill="#f7f4f6" stroke="#8a8b8e" stroke-width="0.8" /><polygon points="1110.1,341.5 1119.1,341.9 1119.7,353.9 1110.7,353.5" fill="none" stroke="#8a8b8e" stroke-width="0.6" /><polygon points="1112.1,343.0 1116.1,343.2 1116.5,352.2 1112.5,352.0" fill="none" stroke="#9a9a9d" stroke-width="0.5" /><circle cx="1103.6" cy="351.5" r="3.900" fill="#f0c3ee"/><path d="M1101.6 351.8l1.700 1.700l3.300-3.800" stroke="#4c2a52" stroke-width="0.900" fill="none"/><polygon points="1125.6,339.5 1215.6,343.0 1216.5,361.6 1126.5,358.0" fill="#f7f4f6" stroke="#8a8b8e" stroke-width="0.8" /><polygon points="1128.6,341.0 1214.6,344.4 1215.3,359.4 1129.3,356.0" fill="none" stroke="#a9a9ac" stroke-width="0.5" /><polygon points="1131.6,342.5 1142.6,342.9 1143.1,354.4 1132.1,354.0" fill="#f9f7f8" stroke="#77787b" stroke-width="0.8" /><polygon points="1134.6,344.5 1142.6,344.8 1143.0,353.3 1135.0,353.0" fill="none" stroke="#a9a9ac" stroke-width="0.5" /><polygon points="1151.1,344.0 1199.1,345.9 1199.4,351.9 1151.4,350.0" fill="none" stroke="#b0b0b3" stroke-width="0.5" /><text x="1136.1" y="358.5" font-size="4.8" font-weight="normal" fill="#333" text-anchor="start" transform="rotate(2.1 1136.1 358.5)" >Android Studio &amp; Tools</text><polygon points="1210.1,345.0 1222.1,345.5 1222.9,361.5 1210.9,361.0" fill="#f7f4f6" stroke="#8a8b8e" stroke-width="0.8" /><polygon points="1212.6,347.0 1219.6,347.3 1220.1,358.3 1213.1,358.0" fill="none" stroke="#a9a9ac" stroke-width="0.5" /><path d="M1205.4 358.5h3.600M1207.2 356.7v3.600" stroke="#222" stroke-width="0.700"/><polygon points="1108.7,362.5 1122.7,363.1 1123.5,381.1 1109.5,380.5" fill="#f7f4f6" stroke="#8a8b8e" stroke-width="0.8" /><polygon points="1111.2,365.0 1120.2,365.4 1120.8,377.4 1111.8,377.0" fill="none" stroke="#8a8b8e" stroke-width="0.6" /><polygon points="1113.2,366.5 1117.2,366.7 1117.6,375.7 1113.6,375.5" fill="none" stroke="#9a9a9d" stroke-width="0.5" /><circle cx="1104.7" cy="375.0" r="3.900" fill="#f0c3ee"/><path d="M1102.7 375.3l1.700 1.700l3.300-3.800" stroke="#4c2a52" stroke-width="0.900" fill="none"/><polygon points="1126.7,363.0 1216.7,366.6 1217.6,385.2 1127.6,381.5" fill="#f7f4f6" stroke="#8a8b8e" stroke-width="0.8" /><polygon points="1129.7,364.5 1215.7,367.9 1216.4,383.0 1130.4,379.5" fill="none" stroke="#a9a9ac" stroke-width="0.5" /><polygon points="1132.7,366.0 1143.7,366.4 1144.2,377.9 1133.2,377.5" fill="#f9f7f8" stroke="#77787b" stroke-width="0.8" /><polygon points="1135.7,368.0 1143.7,368.3 1144.1,376.8 1136.1,376.5" fill="none" stroke="#a9a9ac" stroke-width="0.5" /><polygon points="1152.2,367.5 1200.2,369.4 1200.5,375.4 1152.5,373.5" fill="none" stroke="#b0b0b3" stroke-width="0.5" /><text x="1138.2" y="382.0" font-size="4.8" font-weight="normal" fill="#333" text-anchor="start" transform="rotate(2.1 1138.2 382.0)" >Testing</text><polygon points="1211.2,368.5 1223.2,369.0 1224.0,385.0 1212.0,384.5" fill="#f7f4f6" stroke="#8a8b8e" stroke-width="0.8" /><polygon points="1213.7,370.5 1220.7,370.8 1221.2,381.8 1214.2,381.5" fill="none" stroke="#a9a9ac" stroke-width="0.5" /><path d="M1206.5 382.0h3.600M1208.3 380.2v3.600" stroke="#222" stroke-width="0.700"/><path d="M1091.500 400.400L1216.500 406.800a7.300 7.300 0 0 1 6.600 8a7.300 7.300 0 0 1-7.400 7L1090.700 415.200a7.300 7.300 0 0 1-6.800-7.800a7.300 7.300 0 0 1 7.600-7z" fill="#231a1d"/><polygon points="1092.5,396.5 1222.5,401.9 1223.3,418.0 1093.3,412.5" fill="none" stroke="#77787b" stroke-width="0.5" /><polygon points="1157.5,402.5 1168.5,403.0 1168.8,409.0 1157.8,408.5" fill="none" stroke="#8a8b8e" stroke-width="0.5" /><text x="1149.0" y="413.5" font-size="5.6" font-weight="bold" fill="#f0e9ee" text-anchor="start" transform="rotate(2.1 1149.0 413.5)" >Done</text><polygon points="1092.0,420.0 1223.0,425.6 1226.4,498.0 1095.4,492.0" fill="none" stroke="#8a8b8e" stroke-width="0.9" /><path d="M1096 424.200L1222 430.600" stroke="#9a9a9d" stroke-width="0.900" stroke-dasharray="5 2.500"/><clipPath id="imgclip"><polygon points="1084.500,426 1222,432.500 1226,494 1088,487"/></clipPath><g clip-path="url(#imgclip)"><polygon points="1080,420 1226,428 1230,498 1084,490" fill="#c9e6f7"/><ellipse cx="1150" cy="428" rx="13" ry="9.500" fill="none" stroke="#8ab9c9" stroke-width="0.600"/><path d="M1168 437c3-4 8-5 11-2c3-3 8-3 10 0l1 6h-22z" fill="#f4f8fb"/><path d="M1082 436c10-6 27-5 32 6c3 7 3 18 2 28l-2 20l-30-2z" fill="#3fca70"/><path d="M1196 433c8-3 18-3 27 0l4 62l-30-2c-3-18-3-44-1-60z" fill="#3fca70"/><path d="M1201 441l19 1l1.500 36l-19-1z M1205 452l12 0.600l1 22l-12-0.600z" fill="none" stroke="#9be5b4" stroke-width="0.800"/><path d="M1091 443l13 0.600l0.800 22l-13-0.600z M1094 447l8 0.400" fill="none" stroke="#9be5b4" stroke-width="0.700"/><path d="M1084 466l28-10c5-6 14-9 24-8c8-1 18 0 20 6c3 2 4 6 3 9c-3 6-8 10-14 11c-6 3-12 3-16 0l-16 6l-14 10l-16 0z" fill="#c8794a"/><path d="M1111.500 450l8 1l4 22l-8 2z" fill="#3f7fe0"/><circle cx="1116.500" cy="464" r="6.300" fill="#10303c"/><path d="M1114.500 464.500l1.600 1.400l2.400-3.400" stroke="#f5d76a" stroke-width="0.700" fill="none"/><path d="M1124 467l22 1l0-14" stroke="#f4d9c3" stroke-width="0.700" fill="none" stroke-dasharray="1.500 1"/><polygon points="1161,446 1190,447.500 1190,461.500 1161,460" fill="#11404a"/><path d="M1163.500 449.600l24 1.200M1163.500 453.600l24 1.200M1163.500 457.600l24 1.200" stroke="#63c98f" stroke-width="1.400" stroke-dasharray="7 1.500 4 1.500"/><polygon points="1162,467 1191,468.500 1191.500,483.500 1162.500,482" fill="#4a7fe6"/><circle cx="1167" cy="474.500" r="1.500" fill="#10303c"/><circle cx="1171.500" cy="474.800" r="1.500" fill="#10303c"/><circle cx="1186" cy="476.500" r="2.400" fill="#3fca70"/><path d="M1178.500 470.500v9" stroke="#10303c" stroke-width="1.600" stroke-dasharray="1.600 1.600"/><path d="M1166 488c4-4 12-4 18-2c8-3 22-3 32 1l10 1l1 10l-62-3z" fill="#f3f6f8"/></g><path d="M1088.500 478.500L1226 486" stroke="#8a8b8e" stroke-width="0.700" opacity="0.700"/><polygon points="1088,487 1226,494 1229,566 1091.500,558" fill="#f7f5f7"/><polygon points="1103.5,492.5 1207.5,497.3 1209.4,537.5 1105.4,532.5" fill="none" stroke="#8a8b8e" stroke-width="0.8" /><polygon points="1105.5,496.0 1196.5,500.2 1198.1,533.3 1107.1,529.0" fill="#faf9fa" stroke="#9a9a9d" stroke-width="0.7" /><path d="M1208.5 498.0L1210.2 534.0" stroke="#9a9a9d" stroke-width="0.7" fill="none" /><polygon points="1219.0,500.0 1227.0,500.4 1227.4,509.4 1219.4,509.0" fill="#fbfafb" stroke="#9a9a9d" stroke-width="0.7" /><path d="M1212.500 511.500h3v4.600l-1.500-1.200l-1.500 1.200z" fill="none" stroke="#333" stroke-width="0.700"/><text x="1093.5" y="508.7" font-size="8" font-weight="normal" fill="#3c3c40" text-anchor="start" transform="rotate(2.1 1093.5 508.7)" textLength="96" lengthAdjust="spacingAndGlyphs" >The new Google Pixel Watch</text><text x="1093.5" y="520.7" font-size="8" font-weight="normal" fill="#3c3c40" text-anchor="start" transform="rotate(2.1 1093.5 520.7)" textLength="91" lengthAdjust="spacingAndGlyphs" >is here  – start building for</text><text x="1094.0" y="531.5" font-size="8" font-weight="normal" fill="#5a5a5e" text-anchor="start" transform="rotate(2.1 1094.0 531.5)" textLength="32" lengthAdjust="spacingAndGlyphs" >Wear OS!</text><path d="M1100.0 534.0L1204.0 539.0" stroke="#a9a9ac" stroke-width="0.8" fill="none" stroke-dasharray="6 4"/><polygon points="1099.0,536.5 1142.0,538.6 1142.2,541.8 1099.2,539.7" fill="#faf9fa" stroke="#9a9a9d" stroke-width="0.6" /><circle cx="1096.500" cy="541.800" r="0.900" fill="#0b7a6e"/><text x="1100.0" y="543.6" font-size="4.2" font-weight="normal" fill="#66666a" text-anchor="start" transform="rotate(2.1 1100.0 543.6)" textLength="28" lengthAdjust="spacingAndGlyphs" >Oct 13, 2022 · Article</text><path d="M1100.0 547.0L1218.0 552.7" stroke="#b5b5b8" stroke-width="0.7" fill="none" stroke-dasharray="6 4"/><polygon points="1096.0,548.0 1228.0,554.4 1228.4,562.4 1096.4,556.0" fill="none" stroke="#b5b5b8" stroke-width="0.6" /><text x="1096.5" y="554.5" font-size="5" font-weight="normal" fill="#4a4a4e" text-anchor="start" transform="rotate(2.1 1096.5 554.5)" textLength="118" lengthAdjust="spacingAndGlyphs" >We launched the Google Pixel Watch, powered by</text><polygon points="1084,556.500 1239,565 1241.400,614.300 1086.500,606" fill="#fbfafb"/><polygon points="1080.500,556.300 1087,556.500 1089.600,606.200 1083,606" fill="#ecc9ea"/><path d="M1082 556.500L1244 565.500" stroke="#77797c" stroke-width="1.600"/><polygon points="1229,480 1238,480 1242,563 1233,563" fill="#7c7e81"/><polygon points="1086.5,559.0 1238.5,566.4 1239.8,593.6 1087.8,586.0" fill="none" stroke="#8a8b8e" stroke-width="0.9" /><path d="M1137.5 561.5L1138.8 588.5" stroke="#8a8b8e" stroke-width="0.9" fill="none" /><path d="M1139.5 561.5L1140.8 588.5" stroke="#b0b0b3" stroke-width="0.6" fill="none" /><path d="M1190.0 564.0L1191.3 591.0" stroke="#8a8b8e" stroke-width="0.9" fill="none" /><path d="M1192.0 564.0L1193.3 591.0" stroke="#b0b0b3" stroke-width="0.6" fill="none" /><path d="M1099.5 558.0L1101.8 607.0" stroke="#8a8b8e" stroke-width="0.8" fill="none" /><path d="M1105.5 558.0L1107.8 607.0" stroke="#8a8b8e" stroke-width="0.8" fill="none" /><path d="M1102 563.500h12.500a3 3 0 0 1 3 3v5.500a3 3 0 0 1-3 3h-12z" fill="#f4cdf0" stroke="#c9a5c6" stroke-width="0.500"/><rect x="1110.500" y="564" width="7" height="8" fill="#7c1a86"/><path d="M1111.500 566l2.400 2.400l2.400-2.400" stroke="#fff" stroke-width="1" fill="none"/><circle cx="1123" cy="565.400" r="1.300" fill="#176f86"/><polygon points="1107.0,575.0 1119.5,575.6 1119.7,579.8 1107.2,579.2" fill="none" stroke="#555" stroke-width="0.6" /><text x="1108.5" y="578.8" font-size="3.6" font-weight="normal" fill="#333" text-anchor="start" transform="rotate(2.1 1108.5 578.8)" textLength="10" lengthAdjust="spacingAndGlyphs" >For you</text><polygon points="1161.0,566.5 1170.0,566.9 1170.4,575.4 1161.4,575.0" fill="none" stroke="#555" stroke-width="0.8" /><polygon points="1164.5,567.8 1169.0,568.0 1169.3,574.5 1164.8,574.3" fill="none" stroke="#555" stroke-width="0.8" /><polygon points="1160.0,579.0 1173.0,579.6 1173.2,583.8 1160.2,583.2" fill="none" stroke="#777" stroke-width="0.6" /><text x="1162.0" y="583.0" font-size="3.6" font-weight="normal" fill="#444" text-anchor="start" transform="rotate(2.1 1162.0 583.0)" textLength="9" lengthAdjust="spacingAndGlyphs" >Saved</text><polygon points="1216.0,570.0 1224.0,570.4 1224.4,578.4 1216.4,578.0" fill="none" stroke="#666" stroke-width="0.8" /><path d="M1219.800 572.400v4.400M1221.800 572.500v4.400" stroke="#333" stroke-width="0.900"/><polygon points="1212.0,582.5 1229.0,583.3 1229.2,588.0 1212.2,587.1" fill="none" stroke="#666" stroke-width="0.7" /><text x="1213.5" y="586.8" font-size="3.6" font-weight="normal" fill="#333" text-anchor="start" transform="rotate(2.1 1213.5 586.8)" textLength="14" lengthAdjust="spacingAndGlyphs" >Interests</text><path d="M1078.900 606L1241.400 614.300" stroke="#a3a3a6" stroke-width="1.400"/><polygon points="1233,566 1241,566.400 1242,613 1234,612.600" fill="#dedee0" opacity="0.800"/></g></svg>
<!-- app quality insights -->
<div style="left:33.00px;top:559.50px;width:1308.50px;height:1.00px;background:#222427;"></div>
<div style="left:33.00px;top:592.50px;width:1308.50px;height:1.00px;background:#222427;"></div>
<div style="left:33.00px;top:613.50px;width:1289.00px;height:1.00px;background:#25272a;"></div>
<div style="left:33.00px;top:636.50px;width:1289.00px;height:1.00px;background:#25272a;"></div>
<div style="left:614.30px;top:614.00px;width:1.00px;height:198.00px;background:#232427;"></div>
<div style="left:503.30px;top:614.50px;width:1.00px;height:22.00px;background:#303236;"></div>
<div class="t b" style="left:43.20px;top:569.50px;font-size:10.8px;">App Quality Insights</div>
<svg style="left:173.00px;top:571.50px;" width="11" height="11.5" viewBox="0 0 11 11.5"><g fill="none" stroke="#9b9ea6" stroke-width="1" stroke-linejoin="round"><path d="M0.800 0.800l9 4.800l-9 4.800z"/><path d="M0.800 0.800l5.400 4.800l-5.400 4.800" /></g></svg>
<div class="t " style="left:188.20px;top:569.50px;font-size:11.37px;">Android Vitals</div>
<svg style="left:278.80px;top:570.50px;" width="10.8" height="12.2" viewBox="0 0 10.8 12.2"><path d="M0.600 9.600l1.600-8.800l2.400 3.600z" fill="#ffa000"/><path d="M0.600 9.600l6.400-7.600l1 1.600l1.800 6l-4.400 2.400z" fill="#f57c00"/><path d="M0.600 9.600l4.300-6.600l1.500 2.600l3.400 4l-4.400 2.500z" fill="#ffca28"/></svg>
<div class="t " style="left:294.50px;top:569.50px;font-size:11.26px;">Firebase Crashlytics</div>
<div style="left:268.00px;top:590.80px;width:138.30px;height:3.00px;background:#3574f0;"></div>
<div class="t " style="left:41.40px;top:596.30px;font-size:11.385px;">app › prodRelease: [now-in-android] com.google.samples.apps.nowinandroid</div>
<svg style="left:441.50px;top:602.20px;" width="6.6" height="3.5" viewBox="0 0 6.6 3.5"><path d="M0 0 L3.3 3.5 L6.6 0" fill="none" stroke="#b9bcc3" stroke-width="1.0" stroke-linecap="round" stroke-linejoin="round"/></svg>
<div style="left:462.00px;top:594.50px;width:18.00px;height:18.00px;background:#4b4e53;border-radius:2px"></div>
<div style="left:483.10px;top:594.50px;width:18.00px;height:18.00px;background:#4b4e53;border-radius:2px"></div>
<svg style="left:465.20px;top:597.70px;" width="11.6" height="11.6" viewBox="0 0 11.6 11.6"><circle cx="5.800" cy="5.800" r="5.800" fill="#dd5b5b"/><path d="M3.500 3.500l4.600 4.600M8.100 3.500l-4.600 4.600" stroke="#5b2326" stroke-width="1.150" stroke-linecap="round"/></svg>
<svg style="left:486.30px;top:597.70px;" width="11.6" height="11.6" viewBox="0 0 11.6 11.6"><circle cx="5.800" cy="5.800" r="5.800" fill="#f2c037"/><path d="M5.800 2.600v4" stroke="#5e4a12" stroke-width="1.500" stroke-linecap="round"/><circle cx="5.800" cy="8.800" r="0.900" fill="#5e4a12"/></svg>
<div class="t " style="left:517.50px;top:596.30px;font-size:11.4px;">Last 60 days</div>
<svg style="left:586.50px;top:602.20px;" width="6.6" height="3.5" viewBox="0 0 6.6 3.5"><path d="M0 0 L3.3 3.5 L6.6 0" fill="none" stroke="#b9bcc3" stroke-width="1.0" stroke-linecap="round" stroke-linejoin="round"/></svg>
<div class="t " style="left:606.90px;top:596.30px;font-size:11.17px;">All versions</div>
<svg style="left:670.00px;top:602.20px;" width="6.6" height="3.5" viewBox="0 0 6.6 3.5"><path d="M0 0 L3.3 3.5 L6.6 0" fill="none" stroke="#b9bcc3" stroke-width="1.0" stroke-linecap="round" stroke-linejoin="round"/></svg>
<div class="t " style="left:691.30px;top:596.30px;font-size:11.24px;">All signal states</div>
<svg style="left:775.50px;top:602.20px;" width="6.6" height="3.5" viewBox="0 0 6.6 3.5"><path d="M0 0 L3.3 3.5 L6.6 0" fill="none" stroke="#b9bcc3" stroke-width="1.0" stroke-linecap="round" stroke-linejoin="round"/></svg>
<div class="t " style="left:797.60px;top:596.30px;font-size:11.28px;">All devices</div>
<svg style="left:856.80px;top:602.20px;" width="6.6" height="3.5" viewBox="0 0 6.6 3.5"><path d="M0 0 L3.3 3.5 L6.6 0" fill="none" stroke="#b9bcc3" stroke-width="1.0" stroke-linecap="round" stroke-linejoin="round"/></svg>
<div class="t " style="left:877.50px;top:596.30px;font-size:11.4px;">All operating systems</div>
<svg style="left:992.40px;top:602.20px;" width="6.6" height="3.5" viewBox="0 0 6.6 3.5"><path d="M0 0 L3.3 3.5 L6.6 0" fill="none" stroke="#b9bcc3" stroke-width="1.0" stroke-linecap="round" stroke-linejoin="round"/></svg>
<div class="t " style="left:39.80px;top:617.80px;font-size:9.2px;color:#d0d2d7;">Issues</div>
<div class="t " style="left:508.40px;top:617.80px;font-size:9.4px;color:#d0d2d7;">Events</div>
<div class="t " style="left:564.20px;top:617.80px;font-size:9.4px;color:#d0d2d7;">Users</div>
<div class="t " style="left:619.00px;top:618.50px;font-size:9.6px;color:#d0d2d7;">Details</div>
<div style="left:33.50px;top:636.90px;width:580.30px;height:17.30px;background:#2e436e;"></div>
<svg style="left:35.40px;top:639.70px;" width="11.6" height="11.6" viewBox="0 0 11.6 11.6"><circle cx="5.800" cy="5.800" r="5.800" fill="#f0f2f5"/><path d="M3.500 3.500l4.600 4.600M8.100 3.500l-4.600 4.600" stroke="#2e436e" stroke-width="1.200" stroke-linecap="round"/></svg>
<div class="t " style="left:50.40px;top:638.00px;font-size:11.25px;">. <b style="font-size:10.94px">(has extras) }</b></div>
<div class="t" style="left:511.00px;top:638.00px;width:40.300px;text-align:right;font-size:11.500px">24</div>
<div class="t" style="left:567.00px;top:638.00px;width:40.100px;text-align:right;font-size:11.500px">7</div>
<svg style="left:35.40px;top:656.95px;" width="11.6" height="11.6" viewBox="0 0 11.6 11.6"><circle cx="5.800" cy="5.800" r="5.800" fill="#dd5b5b"/><path d="M3.500 3.500l4.600 4.600M8.100 3.500l-4.600 4.600" stroke="#5b2326" stroke-width="1.200" stroke-linecap="round"/></svg>
<div class="t " style="left:50.40px;top:655.25px;font-size:11.25px;">. <b style="font-size:10.94px">}</b></div>
<div class="t" style="left:511.00px;top:655.25px;width:40.300px;text-align:right;font-size:11.500px">12</div>
<div class="t" style="left:567.00px;top:655.25px;width:40.100px;text-align:right;font-size:11.500px">4</div>
<svg style="left:35.40px;top:674.20px;" width="11.6" height="11.6" viewBox="0 0 11.6 11.6"><circle cx="5.800" cy="5.800" r="5.800" fill="#dd5b5b"/><path d="M3.500 3.500l4.600 4.600M8.100 3.500l-4.600 4.600" stroke="#5b2326" stroke-width="1.200" stroke-linecap="round"/></svg>
<div class="t " style="left:50.40px;top:672.50px;font-size:11.25px;">apps.<b style="font-size:11.18px">nowinandroid/u0a</b></div>
<div class="t" style="left:511.00px;top:672.50px;width:40.300px;text-align:right;font-size:11.500px">10</div>
<div class="t" style="left:567.00px;top:672.50px;width:40.100px;text-align:right;font-size:11.500px">4</div>
<svg style="left:35.40px;top:691.45px;" width="11.6" height="11.6" viewBox="0 0 11.6 11.6"><circle cx="5.800" cy="5.800" r="5.800" fill="#dd5b5b"/><path d="M3.500 3.500l4.600 4.600M8.100 3.500l-4.600 4.600" stroke="#5b2326" stroke-width="1.200" stroke-linecap="round"/></svg>
<div class="t " style="left:50.40px;top:689.75px;font-size:11.25px;">...ed to system_server and system apps only, unless they are annotated with @Readable.</div>
<div class="t" style="left:511.00px;top:689.75px;width:40.300px;text-align:right;font-size:11.500px">7</div>
<div class="t" style="left:567.00px;top:689.75px;width:40.100px;text-align:right;font-size:11.500px">3</div>
<svg style="left:35.40px;top:708.70px;" width="11.6" height="11.6" viewBox="0 0 11.6 11.6"><circle cx="5.800" cy="5.800" r="5.800" fill="#dd5b5b"/><path d="M3.500 3.500l4.600 4.600M8.100 3.500l-4.600 4.600" stroke="#5b2326" stroke-width="1.200" stroke-linecap="round"/></svg>
<div class="t " style="left:50.40px;top:707.00px;font-size:11.25px;">lang.<b style="font-size:10.93px">IndexOutOfBoundsException - Index: 4, Size: 4</b></div>
<div class="t" style="left:511.00px;top:707.00px;width:40.300px;text-align:right;font-size:11.500px">1</div>
<div class="t" style="left:567.00px;top:707.00px;width:40.100px;text-align:right;font-size:11.500px">1</div>
<svg style="left:35.40px;top:725.95px;" width="11.6" height="11.6" viewBox="0 0 11.6 11.6"><circle cx="5.800" cy="5.800" r="5.800" fill="#dd5b5b"/><path d="M3.500 3.500l4.600 4.600M8.100 3.500l-4.600 4.600" stroke="#5b2326" stroke-width="1.200" stroke-linecap="round"/></svg>
<div class="t " style="left:50.40px;top:724.25px;font-size:11.25px;">sqlite.<b style="font-size:10.745px">SQLiteFullException - database or disk is full (code 13 SQLITE_FULL)</b></div>
<div class="t" style="left:511.00px;top:724.25px;width:40.300px;text-align:right;font-size:11.500px">1</div>
<div class="t" style="left:567.00px;top:724.25px;width:40.100px;text-align:right;font-size:11.500px">1</div>
<svg style="left:35.40px;top:743.20px;" width="11.6" height="11.6" viewBox="0 0 11.6 11.6"><circle cx="5.800" cy="5.800" r="5.800" fill="#dd5b5b"/><path d="M3.500 3.500l4.600 4.600M8.100 3.500l-4.600 4.600" stroke="#5b2326" stroke-width="1.200" stroke-linecap="round"/></svg>
<div class="t " style="left:50.40px;top:741.50px;font-size:11.25px;">lang.<b style="font-size:10.805px">NoSuchFieldException - _consensus</b></div>
<div class="t" style="left:511.00px;top:741.50px;width:40.300px;text-align:right;font-size:11.500px">1</div>
<div class="t" style="left:567.00px;top:741.50px;width:40.100px;text-align:right;font-size:11.500px">1</div>
<svg style="left:486.50px;top:725.30px;" width="12" height="11.5" viewBox="0 0 12 11.5"><path d="M4.400 1c0.500 2.900 1.300 3.700 4.200 4.200c-2.900 0.500-3.700 1.300-4.200 4.200c-0.500-2.900-1.300-3.700-4.200-4.200c2.900-0.500 3.700-1.300 4.200-4.200z" fill="#4caf50"/><circle cx="9.800" cy="1.600" r="0.900" fill="#4caf50"/><circle cx="10" cy="9.600" r="0.900" fill="#6b6e75"/></svg>
<svg style="left:1282.40px;top:618.70px;" width="13.6" height="13.6" viewBox="0 0 13.6 13.6"><g class="ic" style="stroke-width:1"><circle cx="6.800" cy="6.800" r="1.900"/><path d="M5.800 1h2l0.400 1.700l1.100 0.600l1.600-0.500l1 1.800l-1.200 1.200v1.200l1.200 1.200l-1 1.800l-1.600-0.500l-1.100 0.600l-0.400 1.700h-2l-0.400-1.700l-1.100-0.600l-1.600 0.500l-1-1.800l1.200-1.200v-1.200l-1.200-1.200l1-1.800l1.600 0.500l1.100-0.600z"/></g></svg>
<div style="left:1305.50px;top:625.00px;width:10.60px;height:1.20px;background:#ced0d6;"></div>
<div class="t " style="left:632.50px;top:645.20px;font-size:11.0px;">Google</div>
<div class="t " style="left:683.70px;top:645.20px;font-size:10.55px;">29%</div>
<div style="left:712.50px;top:651.30px;width:592.50px;height:2.80px;background:#46484d;border-radius:2px"></div>
<div style="left:712.50px;top:651.00px;width:171.70px;height:3.40px;background:#3f7ae8;border-radius:2px"></div>
<svg style="left:1308.70px;top:646.90px;" width="11.6" height="11.6" viewBox="0 0 11.6 11.6"><circle cx="5.800" cy="5.800" r="5.800" fill="#3574f0"/><circle cx="5.800" cy="3.100" r="0.950" fill="#fff"/><path d="M5.800 5v3.900" stroke="#fff" stroke-width="1.500" stroke-linecap="round"/></svg>
<div class="t " style="left:632.50px;top:665.50px;font-size:11.0px;">Other</div>
<div class="t " style="left:683.70px;top:665.50px;font-size:10.55px;">8%</div>
<div style="left:712.50px;top:671.60px;width:592.50px;height:2.80px;background:#46484d;border-radius:2px"></div>
<div style="left:712.50px;top:671.30px;width:47.30px;height:3.40px;background:#3f7ae8;border-radius:2px"></div>
<svg style="left:1308.70px;top:667.20px;" width="11.6" height="11.6" viewBox="0 0 11.6 11.6"><circle cx="5.800" cy="5.800" r="5.800" fill="#3574f0"/><circle cx="5.800" cy="3.100" r="0.950" fill="#fff"/><path d="M5.800 5v3.900" stroke="#fff" stroke-width="1.500" stroke-linecap="round"/></svg>
<div class="t " style="left:621.90px;top:697.20px;font-size:11.32px;">Android Versions</div>
<div style="left:714.00px;top:705.30px;width:607.00px;height:1.00px;background:#393b40;"></div>
<div class="t " style="left:632.50px;top:718.30px;font-size:11.0px;">Android (12)</div>
<div class="t " style="left:701.60px;top:718.30px;font-size:10.55px;">58%</div>
<div style="left:729.20px;top:724.40px;width:575.80px;height:2.80px;background:#46484d;border-radius:2px"></div>
<div style="left:729.20px;top:724.10px;width:333.50px;height:3.40px;background:#3f7ae8;border-radius:2px"></div>
<svg style="left:1308.70px;top:720.00px;" width="11.6" height="11.6" viewBox="0 0 11.6 11.6"><circle cx="5.800" cy="5.800" r="5.800" fill="#3574f0"/><circle cx="5.800" cy="3.100" r="0.950" fill="#fff"/><path d="M5.800 5v3.900" stroke="#fff" stroke-width="1.500" stroke-linecap="round"/></svg>
<div class="t " style="left:632.50px;top:738.70px;font-size:11.0px;">Android (13)</div>
<div class="t " style="left:701.60px;top:738.70px;font-size:10.55px;">25%</div>
<div style="left:729.20px;top:744.80px;width:575.80px;height:2.80px;background:#46484d;border-radius:2px"></div>
<div style="left:729.20px;top:744.50px;width:143.50px;height:3.40px;background:#3f7ae8;border-radius:2px"></div>
<svg style="left:1308.70px;top:740.40px;" width="11.6" height="11.6" viewBox="0 0 11.6 11.6"><circle cx="5.800" cy="5.800" r="5.800" fill="#3574f0"/><circle cx="5.800" cy="3.100" r="0.950" fill="#fff"/><path d="M5.800 5v3.900" stroke="#fff" stroke-width="1.500" stroke-linecap="round"/></svg>
<div class="t " style="left:632.50px;top:759.10px;font-size:11.0px;">Android (9)</div>
<div class="t " style="left:701.60px;top:759.10px;font-size:10.55px;">8%</div>
<div style="left:729.20px;top:765.20px;width:575.80px;height:2.80px;background:#46484d;border-radius:2px"></div>
<div style="left:729.20px;top:764.90px;width:44.80px;height:3.40px;background:#3f7ae8;border-radius:2px"></div>
<svg style="left:1308.70px;top:760.80px;" width="11.6" height="11.6" viewBox="0 0 11.6 11.6"><circle cx="5.800" cy="5.800" r="5.800" fill="#3574f0"/><circle cx="5.800" cy="3.100" r="0.950" fill="#fff"/><path d="M5.800 5v3.900" stroke="#fff" stroke-width="1.500" stroke-linecap="round"/></svg>
<div class="t " style="left:632.50px;top:779.50px;font-size:11.0px;">Other</div>
<div class="t " style="left:701.60px;top:779.50px;font-size:10.55px;">8%</div>
<div style="left:729.20px;top:785.60px;width:575.80px;height:2.80px;background:#46484d;border-radius:2px"></div>
<div style="left:729.20px;top:785.30px;width:44.80px;height:3.40px;background:#3f7ae8;border-radius:2px"></div>
<svg style="left:1308.70px;top:781.20px;" width="11.6" height="11.6" viewBox="0 0 11.6 11.6"><circle cx="5.800" cy="5.800" r="5.800" fill="#3574f0"/><circle cx="5.800" cy="3.100" r="0.950" fill="#fff"/><path d="M5.800 5v3.900" stroke="#fff" stroke-width="1.500" stroke-linecap="round"/></svg>
<div style="left:1321.50px;top:614.00px;width:1.00px;height:198.00px;background:#222427;"></div>
<div style="left:1322.00px;top:614.00px;width:19.30px;height:61.00px;background:#3574f0;"></div>
<svg style="left:1326.00px;top:624.00px;" width="11" height="10" viewBox="0 0 11 10"><g fill="none" stroke="#fff" stroke-width="1"><rect x="0.500" y="0.500" width="10" height="9" rx="1.200"/><path d="M0.500 3.400h10M3.900 0.500v9M7.300 0.500v9"/></g></svg>
<div class="t" style="left:1301.40px;top:646.60px;width:60px;text-align:center;font-size:9.400px;font-weight:bold;color:#fff;transform:rotate(90deg)">Details</div>
<svg style="left:1326.00px;top:685.50px;" width="10.5" height="10.2" viewBox="0 0 10.5 10.2"><g class="ic" style="stroke-width:1"><path d="M0.500 1.500a1 1 0 0 1 1-1h7.400a1 1 0 0 1 1 1v5l-3 3.200h-5.400a1 1 0 0 1-1-1z"/><path d="M2.400 3h5.400M2.400 5h3.600M9.900 6.500h-3v3.200"/></g></svg>
<div class="t" style="left:1301.40px;top:706.40px;width:60px;text-align:center;font-size:9.400px;font-weight:bold;color:#d5d7db;transform:rotate(90deg)">Notes</div>
<!-- tool strips -->
<div style="left:32.50px;top:33.00px;width:1.00px;height:527.00px;background:#1f2023;"></div>
<div style="left:1341.00px;top:33.00px;width:1.00px;height:779.00px;background:#282a2d;"></div>
<svg style="left:8.00px;top:43.00px;" width="16.5" height="14" viewBox="0 0 16.5 14"><g class="ic" style="stroke-width:1.250"><path d="M0.800 2.400a1.400 1.400 0 0 1 1.400-1.400h3.400l1.800 1.800h6.800a1.400 1.400 0 0 1 1.400 1.400v7.400a1.400 1.400 0 0 1-1.400 1.400h-12a1.400 1.400 0 0 1-1.400-1.400z"/></g></svg>
<svg style="left:8.00px;top:75.50px;" width="16" height="15.5" viewBox="0 0 16 15.5"><g class="ic" style="stroke-width:1.250"><circle cx="7.200" cy="3.400" r="2.700"/><rect x="1" y="8.200" width="6.400" height="6.400" rx="1" style="stroke-width:2"/><path d="M12.400 9.200l2.600 4.400h-5.200z"/></g></svg>
<div style="left:9.60px;top:113.80px;width:2.50px;height:2.50px;background:#ced0d6;border-radius:1.250px"></div>
<div style="left:14.80px;top:113.80px;width:2.50px;height:2.50px;background:#ced0d6;border-radius:1.250px"></div>
<div style="left:20.00px;top:113.80px;width:2.50px;height:2.50px;background:#ced0d6;border-radius:1.250px"></div>
<svg style="left:8.30px;top:661.20px;" width="15" height="12.6" viewBox="0 0 17.5 15"><g class="ic" style="stroke-width:1.200"><path d="M6 2l2.400 2.400h4.800l2.400-2.400v9.600a2 2 0 0 1-2 2h-5.600a2 2 0 0 1-2-2z"/><path d="M0.800 5.600h4M0.800 8.600h4M0.800 11.600h4"/><path d="M9.600 10.400l1.200 0.900l1.200-0.900"/></g><circle cx="8.900" cy="7.800" r="0.800" fill="#ced0d6"/><circle cx="12.700" cy="7.800" r="0.800" fill="#ced0d6"/></svg>
<svg style="left:8.00px;top:692.00px;" width="15" height="15" viewBox="0 0 15 15"><g class="ic" style="stroke-width:1.250"><circle cx="7.500" cy="7.500" r="6.700"/><path d="M7.500 4v4.400"/></g><circle cx="7.500" cy="10.800" r="0.900" fill="#ced0d6"/></svg>
<div style="left:3.90px;top:720.80px;width:24.40px;height:24.00px;background:#3a3d42;border-radius:5px"></div>
<svg style="left:7.90px;top:726.50px;" width="15.5" height="13" viewBox="0 0 15.5 13"><g class="ic" style="stroke-width:1.150"><path d="M3.400 0.800h8.600l2.800 3.600l-7.100 7.800l-7.100-7.800z"/><path d="M0.800 4.400h13.800M5.200 4.400l2.500 7.600l2.500-7.600M5.200 4.400l2.500-3.600l2.500 3.600"/></g></svg>
<svg style="left:7.90px;top:758.50px;" width="15.5" height="13" viewBox="0 0 15.5 13"><g class="ic" style="stroke-width:1.200"><rect x="0.700" y="0.700" width="14" height="11.600" rx="1.600"/><path d="M3.400 4l2.400 2.200l-2.400 2.200M7.400 9h3.600"/></g></svg>
<svg style="left:9.10px;top:790.00px;" width="12" height="15" viewBox="0 0 12 15"><g class="ic" style="stroke-width:1.200"><circle cx="3" cy="3" r="2.200"/><circle cx="9.400" cy="4.600" r="1.900"/><path d="M3 5.200v9M3 10.800h2.400c2.600 0 4-1.200 4-4.200"/></g></svg>
<svg style="left:1350.50px;top:41.30px;" width="15" height="16" viewBox="0 0 15 16"><g class="ic" style="stroke-width:1.250"><path d="M2.400 11.200v-4.800a5.100 5.100 0 0 1 10.200 0v4.800l1.400 1.600h-13z"/><path d="M6 14.800h3"/></g></svg>
<svg style="left:1349.50px;top:75.50px;" width="17.5" height="14.5" viewBox="0 0 17.5 14.5"><g class="ic" style="stroke-width:1.250"><path d="M1 12.400c-0.800-3.600 0.800-6.800 4-7.800c1.800-0.600 3.400-0.300 4.800 0.500c0.900-2 2.700-3.400 4.600-3.500c1.900-0.100 3.100 1.300 3 3c-0.100 1.600-1.500 2.700-3 2.400c-1-0.200-1.500-1.100-1.200-1.900"/><path d="M1 12.400c1.300 0.500 2.400 0.100 2.900-1.100c0.800 1.400 2.200 1.700 3.300 0.800c0.800 1.200 2.300 1.300 3.300 0.200c1.800-0.400 3.100-2.200 3.400-5.100"/><path d="M6.200 8.200c0.800-0.600 1.700-0.700 2.500-0.300"/></g></svg>
<svg style="left:1350.50px;top:108.00px;" width="16" height="16" viewBox="0 0 16 16"><g class="ic" style="stroke-width:1.200"><path d="M5.800 13.400h-3.600a1.200 1.200 0 0 1-1.200-1.200v-10a1.200 1.200 0 0 1 1.200-1.200h5.600a1.200 1.200 0 0 1 1.200 1.200v4.600"/><path d="M6 14.800c0-2.800 1.800-4.400 4.400-4.400s4.400 1.600 4.400 4.400z"/><path d="M7.400 8.800l1 1.800M13.400 8.800l-1 1.800"/></g></svg>
<svg style="left:1350.50px;top:141.00px;" width="16" height="16" viewBox="0 0 16 16"><g class="ic" style="stroke-width:1.200"><path d="M6 13.800h-3.800a1.200 1.200 0 0 1-1.200-1.200v-10.400a1.200 1.200 0 0 1 1.200-1.200h5.600a1.200 1.200 0 0 1 1.200 1.200v5.400"/><path d="M3.800 2.600h2.400"/><rect x="7.400" y="9" width="7" height="4.400" rx="0.800"/><path d="M8.600 15.200h4.600"/></g><circle cx="14.200" cy="13.400" r="1.600" fill="#2fd24b"/></svg>
<div style="left:1346.00px;top:168.60px;width:24.40px;height:24.40px;background:#3574f0;border-radius:5.500px"></div>
<svg style="left:1350.50px;top:173.50px;" width="16" height="15" viewBox="0 0 16 15"><g fill="none" stroke="#fff" stroke-width="1.250" stroke-linecap="round" stroke-linejoin="round"><path d="M3.200 3.200v-1.200a1 1 0 0 1 1-1h9.600a1 1 0 0 1 1 1v6.400"/><path d="M6.400 11.400h-4.600a1 1 0 0 1-1-1v-6.200a1 1 0 0 1 1-1h10"/><circle cx="10" cy="9" r="2.700"/><path d="M12 11l2.800 2.800"/></g></svg>
<svg style="left:1350.00px;top:206.50px;" width="17" height="15.5" viewBox="0 0 17 15.5"><g class="ic" style="stroke-width:1.250"><path d="M1.200 10.800c0-3.800 2.600-6.200 6.400-6.200s6.400 2.400 6.400 6.200z"/><path d="M3 1.600l1.800 3.400M12.200 1.600l-1.800 3.400"/><path d="M13.600 10.400v4.800M11.400 12.800h4.400M12 11.200l3.200 3.200M15.200 11.200l-3.200 3.200" style="stroke-width:0.800"/></g><circle cx="5.400" cy="8.200" r="0.700" fill="#ced0d6"/><circle cx="9.800" cy="8.200" r="0.700" fill="#ced0d6"/></svg>
</div>
</body>
</html>
